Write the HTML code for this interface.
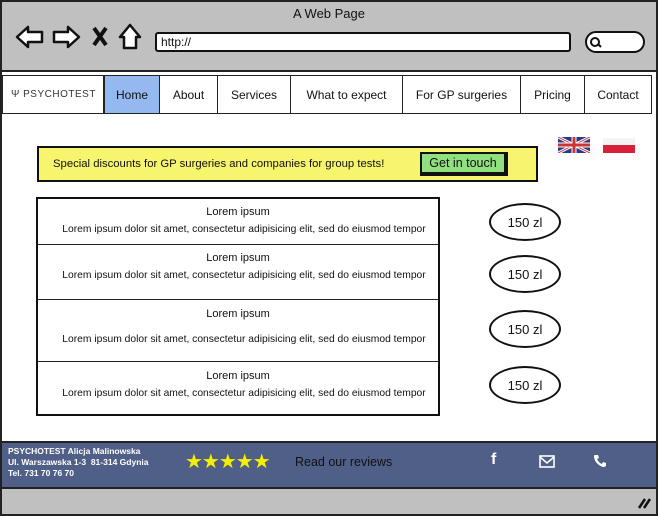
<!DOCTYPE html>
<html><head><style>
*{margin:0;padding:0;box-sizing:border-box}
body{width:658px;height:516px;background:#fff;font-family:"Liberation Sans",sans-serif;position:relative;overflow:hidden;color:#111}
.a{position:absolute}
.nav div{position:absolute;top:75px;height:39px;border:1.5px solid #222;font-size:12px;display:flex;align-items:center;justify-content:center;background:#fff}
.row{position:absolute;left:38px;width:400px;border-bottom:1.5px solid #222;text-align:center;font-size:11px}
.row div+div{font-size:10.3px;padding-left:12px}
.ov{position:absolute;left:489px;width:72px;height:38px;border:2px solid #111;border-radius:50%;font-size:13px;display:flex;align-items:center;justify-content:center}
</style></head><body>
<div class="a" style="left:0;top:0;width:658px;height:516px;border:2px solid #222"></div>
<div class="a" style="left:2px;top:2px;width:654px;height:70px;background:#c0c0c0;border-bottom:2px solid #222"></div>
<div class="a" style="left:0;top:6px;width:658px;text-align:center;font-size:13px">A Web Page</div>
<svg class="a" style="left:14px;top:23px" width="130" height="28" viewBox="0 0 130 28" fill="#fff" stroke="#111" stroke-width="2.5" stroke-linejoin="round">
<path d="M3 14 L14 4 L14 9 L28 9 L28 19 L14 19 L14 24 Z"/>
<path d="M65 14 L54 4 L54 9 L40 9 L40 19 L54 19 L54 24 Z"/>
<path d="M80 5 L92 22 M92 5 L80 22" stroke-width="4" fill="none"/>
<path d="M116 2 L106 14 L110 14 L110 25 L122 25 L122 14 L126 14 Z"/>
</svg>
<div class="a" style="left:155px;top:32px;width:416px;height:20px;background:#fff;border:2px solid #111;border-radius:3px;font-size:12px;padding-left:4px;line-height:16px">http://</div>
<div class="a" style="left:585px;top:31px;width:60px;height:22px;background:#fff;border:2px solid #111;border-radius:11px"></div>
<svg class="a" style="left:589px;top:36px" width="14" height="12"><circle cx="6" cy="6" r="4" fill="none" stroke="#111" stroke-width="2"/><path d="M9 8 L12 11" stroke="#111" stroke-width="2"/></svg>
<div class="nav">
<div style="left:2px;width:102px;justify-content:flex-start;padding-left:8px;font-size:10px;letter-spacing:0.5px;color:#334">Ψ PSYCHOTEST</div>
<div style="left:104px;width:56px;background:#94b8f0">Home</div>
<div style="left:159px;width:59px">About</div>
<div style="left:217px;width:74px">Services</div>
<div style="left:290px;width:113px">What to expect</div>
<div style="left:402px;width:119px">For GP surgeries</div>
<div style="left:520px;width:65px">Pricing</div>
<div style="left:584px;width:68px">Contact</div>
</div>
<svg class="a" style="left:558px;top:137px" width="32" height="16" viewBox="0 0 32 16"><rect width="32" height="16" fill="#2a3a8a"/><path d="M0 0L32 16M32 0L0 16" stroke="#fff" stroke-width="3"/><path d="M0 0L32 16M32 0L0 16" stroke="#c33" stroke-width="1"/><path d="M16 0V16M0 8H32" stroke="#fff" stroke-width="5"/><path d="M16 0V16M0 8H32" stroke="#c33" stroke-width="3"/></svg>
<div class="a" style="left:603px;top:138px;width:32px;height:7px;background:#f4f4f4"></div>
<div class="a" style="left:603px;top:145px;width:32px;height:8px;background:#d9203a"></div>
<div class="a" style="left:37px;top:146px;width:501px;height:36px;background:#f7f46e;border:2px solid #111"></div>
<div class="a" style="left:53px;top:158px;font-size:11.3px">Special discounts for GP surgeries and companies for group tests!</div>
<div class="a" style="left:420px;top:152px;width:88px;height:24px;background:#90e080;border:2px solid #111;border-right-width:4px;border-bottom-width:4px;font-size:12.5px;text-align:center;line-height:18px">Get in touch</div>
<div class="a" style="left:36px;top:197px;width:404px;height:219px;border:2px solid #111"></div>
<div class="row" style="top:199px;height:46px"><div style="margin-top:7px">Lorem ipsum</div><div style="margin-top:6px">Lorem ipsum dolor sit amet, consectetur adipisicing elit, sed do eiusmod tempor</div></div>
<div class="row" style="top:245px;height:55px"><div style="margin-top:7px">Lorem ipsum</div><div style="margin-top:6px">Lorem ipsum dolor sit amet, consectetur adipisicing elit, sed do eiusmod tempor</div></div>
<div class="row" style="top:300px;height:62px"><div style="margin-top:8px">Lorem ipsum</div><div style="margin-top:14px">Lorem ipsum dolor sit amet, consectetur adipisicing elit, sed do eiusmod tempor</div></div>
<div class="row" style="top:362px;height:52px;border:none"><div style="margin-top:8px">Lorem ipsum</div><div style="margin-top:6px">Lorem ipsum dolor sit amet, consectetur adipisicing elit, sed do eiusmod tempor</div></div>
<div class="ov" style="top:203px">150 zl</div>
<div class="ov" style="top:255px">150 zl</div>
<div class="ov" style="top:310px">150 zl</div>
<div class="ov" style="top:366px">150 zl</div>
<div class="a" style="left:2px;top:441px;width:654px;height:48px;background:#4f5f88;border-top:2px solid #222;border-bottom:2px solid #222"></div>
<div class="a" style="left:8px;top:446px;font-size:8.5px;color:#fff;font-weight:bold;line-height:11px">PSYCHOTEST Alicja Malinowska<br>Ul. Warszawska 1-3&nbsp; 81-314 Gdynia<br>Tel. 731 70 76 70</div>
<div class="a" style="left:185px;top:449px;font-size:20px;color:#f5f000;letter-spacing:-1px">★★★★★</div>
<div class="a" style="left:295px;top:455px;font-size:12.5px;color:#111">Read our reviews</div>
<div class="a" style="left:491px;top:451px;font-size:16px;color:#fff;font-weight:bold">f</div>
<svg class="a" style="left:539px;top:455px" width="16" height="13"><rect x="1" y="1" width="14" height="11" fill="none" stroke="#fff" stroke-width="1.6"/><path d="M1 2 L8 8 L15 2" fill="none" stroke="#fff" stroke-width="1.6"/></svg>
<svg class="a" style="left:593px;top:454px" width="14" height="14" viewBox="0 0 14 14"><path d="M2 1 L5 1 L6 4 L4 5 Q6 9 9 10 L10 8 L13 9 L13 12 Q12 13 10 13 Q2 10 1 3 Q1 1 2 1Z" fill="#fff"/></svg>
<div class="a" style="left:2px;top:489px;width:654px;height:25px;background:#c0c0c0"></div>
<svg class="a" style="left:636px;top:496px" width="16" height="14"><path d="M3 12 L9 3 M8 12 L14 3" stroke="#111" stroke-width="2.5"/></svg>
</body></html>
